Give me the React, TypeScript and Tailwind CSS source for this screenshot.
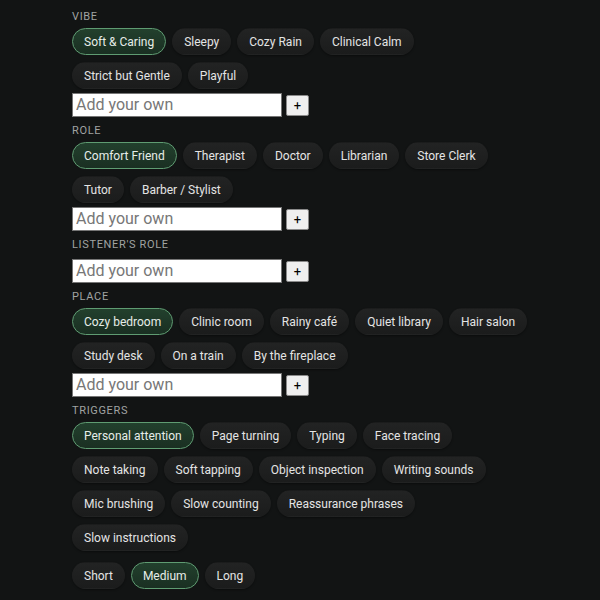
import React, { useState } from "react";

type Section = {
  label: string;
  rows: string[][];
  selected: string;
  custom: boolean;
};

const sections: Section[] = [
  {
    label: "Vibe",
    rows: [
      ["Soft & Caring", "Sleepy", "Cozy Rain", "Clinical Calm"],
      ["Strict but Gentle", "Playful"],
    ],
    selected: "Soft & Caring",
    custom: true,
  },
  {
    label: "Role",
    rows: [
      ["Comfort Friend", "Therapist", "Doctor", "Librarian", "Store Clerk"],
      ["Tutor", "Barber / Stylist"],
    ],
    selected: "Comfort Friend",
    custom: true,
  },
  {
    label: "Listener's role",
    rows: [],
    selected: "",
    custom: true,
  },
  {
    label: "Place",
    rows: [
      ["Cozy bedroom", "Clinic room", "Rainy café", "Quiet library", "Hair salon"],
      ["Study desk", "On a train", "By the fireplace"],
    ],
    selected: "Cozy bedroom",
    custom: true,
  },
  {
    label: "Triggers",
    rows: [
      ["Personal attention", "Page turning", "Typing", "Face tracing"],
      ["Note taking", "Soft tapping", "Object inspection", "Writing sounds"],
      ["Mic brushing", "Slow counting", "Reassurance phrases"],
      ["Slow instructions"],
    ],
    selected: "Personal attention",
    custom: false,
  },
];

const Chip = ({ text, active, onClick }: { text: string; active: boolean; onClick: () => void }) => (
  <button
    onClick={onClick}
    className={
      active
        ? "h-[27px] px-[11px] rounded-full border border-[#5f9c72] bg-gradient-to-b from-[#22402d] to-[#1a2f22] text-[12px] text-[#e6ede8] leading-none whitespace-nowrap"
        : "h-[27px] px-[11px] rounded-full border border-transparent bg-gradient-to-b from-[#222323] to-[#1b1c1c] text-[12px] text-[#e4e4e4] leading-none whitespace-nowrap shadow-[0_1px_2px_rgba(0,0,0,0.4)]"
    }
  >
    {text}
  </button>
);

const CustomInput = () => (
  <div className="flex items-center gap-[4px] mt-[3px] mb-[4px]">
    <input
      placeholder="Add your own"
      className="w-[210px] h-[24px] bg-white text-[16px] px-[3px] text-[#333] placeholder:text-[#777] border border-[#767676] outline-none"
    />
    <button className="w-[23px] h-[21px] bg-[#efefef] border border-[#8a8a8a] rounded-[2px] text-[13px] text-black leading-none flex items-center justify-center">
      +
    </button>
  </div>
);

export default function App() {
  const [picked, setPicked] = useState<Record<string, string>>(
    Object.fromEntries(sections.map((s) => [s.label, s.selected]))
  );
  const [length, setLength] = useState("Medium");

  return (
    <div
      className="min-h-[600px] bg-[#121414] pl-[72px] pr-[72px] pt-[10px]"
      style={{ fontFamily: "Roboto, 'Noto Sans', sans-serif" }}
    >
      <div className="flex flex-col gap-[3px]">
        {sections.map((s) => (
          <div key={s.label} className="flex flex-col">
            <div className="h-[14px] leading-[14px] text-[11px] uppercase tracking-[0.06em] text-[#a0a3a2] mb-[4px]">
              {s.label}
            </div>
            {s.rows.length > 0 && (
              <div className="flex flex-col gap-[7px] mb-[1px]">
                {s.rows.map((row, i) => (
                  <div key={i} className="flex gap-[6px]">
                    {row.map((o) => (
                      <Chip
                        key={o}
                        text={o}
                        active={picked[s.label] === o}
                        onClick={() => setPicked({ ...picked, [s.label]: o })}
                      />
                    ))}
                  </div>
                ))}
              </div>
            )}
            {s.custom && <CustomInput />}
          </div>
        ))}
      </div>
      <div className="flex gap-[6px] mt-[10px]">
        {["Short", "Medium", "Long"].map((o) => (
          <Chip key={o} text={o} active={length === o} onClick={() => setLength(o)} />
        ))}
      </div>
    </div>
  );
}
